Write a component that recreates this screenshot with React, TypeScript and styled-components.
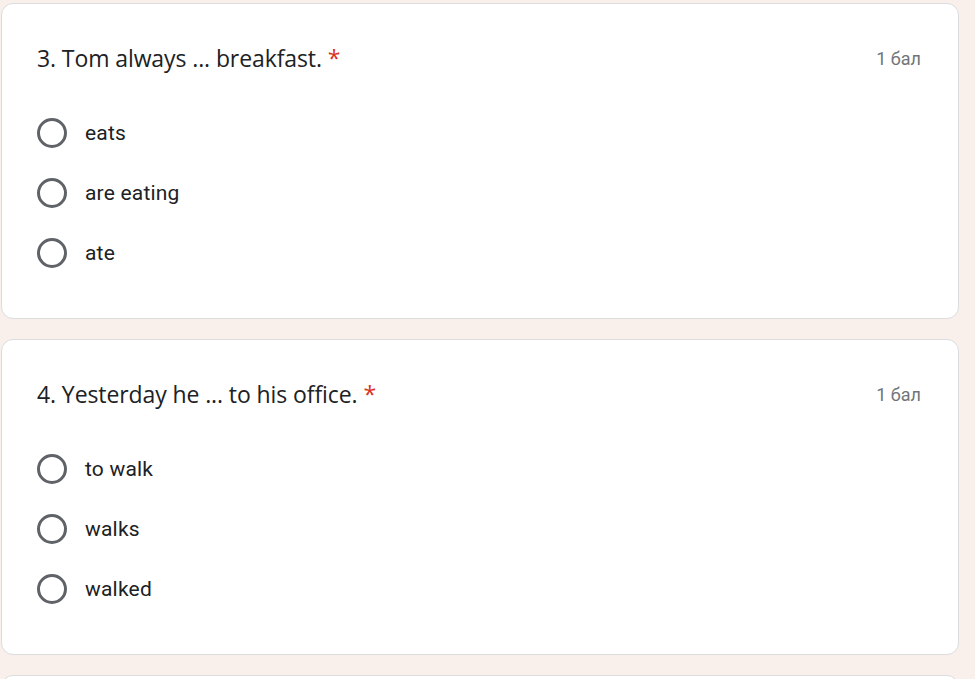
import styled, { createGlobalStyle } from 'styled-components';

const GlobalStyle = createGlobalStyle`
  html, body {
    margin: 0;
    padding: 0;
    background: #f9f0ec;
    overflow: hidden;
  }
`;

const Page = styled.div`
  display: flex;
  flex-direction: column;
  gap: 20px;
  padding: 3px 0 0 1px;
  width: 958px;
`;

const Card = styled.div`
  background: #fff;
  border: 1px solid #dadce0;
  border-radius: 12px;
  padding: 37px 37px 35px 35px;
  height: 316px;
  box-sizing: border-box;
  flex-shrink: 0;
`;

const Header = styled.div`
  display: flex;
  justify-content: space-between;
  align-items: center;
  height: 34px;
`;

const Title = styled.div`
  font-family: 'Open Sans', sans-serif;
  font-size: 23px;
  color: #202124;
  letter-spacing: -0.1px;
`;

const Required = styled.span`
  color: #d93025;
  margin-left: 6px;
`;

const Points = styled.div`
  font-family: Roboto, sans-serif;
  font-size: 18px;
  color: #70757a;
`;

const Options = styled.div`
  display: flex;
  flex-direction: column;
  margin-top: 28px;
`;

const Option = styled.label`
  display: flex;
  align-items: center;
  height: 60px;
  gap: 18px;
  font-family: Roboto, sans-serif;
  font-size: 21px;
  color: #202124;
  letter-spacing: 0.2px;
  cursor: pointer;
`;

const Radio = styled.span`
  width: 30px;
  height: 30px;
  border: 3px solid #5f6368;
  border-radius: 50%;
  box-sizing: border-box;
  flex-shrink: 0;
`;

const questions = [
  { title: '3. Tom always ... breakfast.', options: ['eats', 'are eating', 'ate'] },
  { title: '4. Yesterday he ... to his office.', options: ['to walk', 'walks', 'walked'] },
  { title: '', options: [] },
];

export default function App() {
  return (
    <>
      <GlobalStyle />
      <Page>
        {questions.map((q, i) => (
          <Card key={i}>
            {q.title && (
              <>
                <Header>
                  <Title>
                    {q.title}
                    <Required>*</Required>
                  </Title>
                  <Points>1 бал</Points>
                </Header>
                <Options>
                  {q.options.map((o) => (
                    <Option key={o}>
                      <Radio />
                      {o}
                    </Option>
                  ))}
                </Options>
              </>
            )}
          </Card>
        ))}
      </Page>
    </>
  );
}
